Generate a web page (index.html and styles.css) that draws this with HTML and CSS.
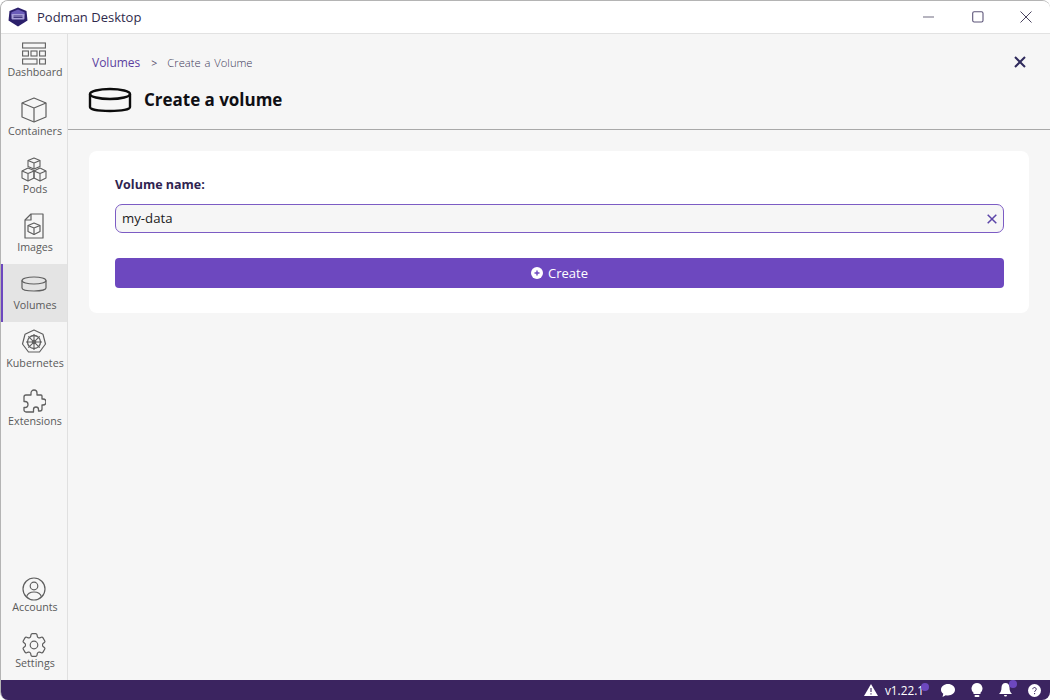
FILE: index.html
```html
<!DOCTYPE html>
<html lang="en">
<head>
<meta charset="utf-8">
<title>Podman Desktop</title>
<link rel="stylesheet" href="styles.css">
</head>
<body>
<div class="window">
  <header class="titlebar">
    <svg class="logo" viewBox="0 0 20 20" width="20" height="20">
      <path d="M10 .5l8.500 3.500 1 9.500L10 19.500.5 13.500l1-9.500z" fill="#2b1f6b"/>
      <path d="M10 2.500l6.500 2.700.5 3H3l.5-3z" fill="#6a5cb8"/>
      <rect x="3.500" y="7" width="13" height="5.500" rx="1" fill="#a8a0d8"/>
      <path d="M5.500 9h9M5.500 10.500h9" stroke="#2b1f6b" stroke-width=".8"/>
    </svg>
    <span class="app-name">Podman Desktop</span>
    <div class="win-controls">
      <svg class="win-btn" viewBox="0 0 12 12" width="12" height="12"><path d="M0 6h11" stroke="#6e6a80" stroke-width="1.200"/></svg>
      <svg class="win-btn" viewBox="0 0 12 12" width="12" height="12"><rect x=".7" y=".7" width="10.300" height="10.300" rx="1.500" fill="none" stroke="#5c5478" stroke-width="1.100"/></svg>
      <svg class="win-btn" viewBox="0 0 12 12" width="12" height="12"><path d="M.5.500l11 11M11.500.500l-11 11" stroke="#4b4560" stroke-width="1"/></svg>
    </div>
  </header>
  <div class="body-row">
    <nav class="sidebar">
      <div class="nav-top">
        <a class="nav-item nav-first">
          <svg viewBox="0 0 24 24" width="24" height="24" class="nav-icon icon-tight"><g fill="none" stroke="#5f5f5f" stroke-width="1.100"><rect x=".6" y="1" width="22.800" height="5"/><rect x=".6" y="9" width="5.800" height="5"/><rect x="9" y="9" width="6" height="5"/><rect x="17.600" y="9" width="5.800" height="5"/><rect x=".6" y="17" width="14.400" height="5"/><rect x="17.600" y="17" width="5.800" height="5"/></g></svg>
          <span>Dashboard</span>
        </a>
        <a class="nav-item">
          <svg viewBox="0 0 26 26" width="26" height="26" class="nav-icon"><g fill="none" stroke="#5f5f5f" stroke-width="1.200" stroke-linejoin="round"><path d="M13 1l12 5v14l-12 5-12-5V6z"/><path d="M1 6l12 5 12-5M13 11v14"/></g></svg>
          <span>Containers</span>
        </a>
        <a class="nav-item">
          <svg viewBox="0 0 26 26" width="26" height="26" class="nav-icon icon-tight"><g fill="none" stroke="#5f5f5f" stroke-width="1.100" stroke-linejoin="round"><path d="M13 1l6 2.500v6L13 12l-6-2.500v-6z"/><path d="M7 3.500l6 2.500 6-2.500M13 6v6"/><path d="M7 11l6 2.500v7.500L7 24l-6-3v-7z"/><path d="M1 14l6 2.500 6-2.500M7 16.500V24"/><path d="M19 11l6 3v7l-6 3-6-3v-7z"/><path d="M13 14l6 2.500 6-2.500M19 16.500V24"/></g></svg>
          <span>Pods</span>
        </a>
        <a class="nav-item">
          <svg viewBox="0 0 22 26" width="22" height="26" class="nav-icon"><g fill="none" stroke="#5f5f5f" stroke-width="1.200" stroke-linejoin="round"><path d="M8 1h12v24H2V7z"/><path d="M8 1v6H2"/><path d="M11 10l6 2.500v6L11 21.500l-6-3v-6z"/><path d="M5 12.500l6 2.500 6-2.500M11 15v6.500"/></g></svg>
          <span>Images</span>
        </a>
        <a class="nav-item active">
          <svg viewBox="0 0 26 16" width="26" height="16" class="nav-icon icon-raised"><g fill="none" stroke="#5f5f5f" stroke-width="1.200"><ellipse cx="13" cy="4.500" rx="12" ry="3.500"/><path d="M1 4.500V12c0 1.800 5 3 12 3s12-1.200 12-3V4.500"/></g></svg>
          <span>Volumes</span>
        </a>
        <a class="nav-item">
          <svg viewBox="0 0 26 26" width="26" height="26" class="nav-icon"><g fill="none" stroke="#5f5f5f"><path d="M13 1l9 4.300 2.500 9.700-6 8H7.500l-6-8L4 5.300z" stroke-width="1.200" stroke-linejoin="round"/><circle cx="13" cy="13" r="6.500" stroke-width="1.300"/><path d="M13 5v16M5 13h16M7.300 7.300l11.400 11.400M18.700 7.300L7.300 18.700" stroke-width="1.100"/><circle cx="13" cy="13" r="1.800" fill="#5f5f5f"/></g></svg>
          <span>Kubernetes</span>
        </a>
        <a class="nav-item">
          <svg viewBox="0 0 24 26" width="24" height="26" class="nav-icon icon-tight"><path d="M9 6V4a3 3 0 016 0v2h4a1 1 0 011 1v3h1a3 3 0 010 6h-1v4a2 2 0 01-2 2h-1.500v-1.500a2.500 2.500 0 00-5 0V23H4a2 2 0 01-2-2v-2.500h1a3 3 0 000-6H2V8a2 2 0 012-2z" fill="none" stroke="#5f5f5f" stroke-width="1.300" stroke-linejoin="round"/></svg>
          <span>Extensions</span>
        </a>
      </div>
      <div class="nav-bottom">
        <a class="nav-item short">
          <svg viewBox="0 0 24 24" width="24" height="24" class="nav-icon icon-tight"><g fill="none" stroke="#5f5f5f" stroke-width="1.200"><circle cx="12" cy="12" r="11"/><circle cx="12" cy="9" r="3.800"/><path d="M4.500 20c1-3.500 4-5 7.500-5s6.500 1.500 7.500 5"/></g></svg>
          <span>Accounts</span>
        </a>
        <a class="nav-item short">
          <svg viewBox="2.500 2.500 19 19" width="24" height="24" class="nav-icon icon-tight"><g fill="none" stroke="#5f5f5f" stroke-width=".95" stroke-linejoin="round"><path d="M9.594 3.940c.09-.542.56-.94 1.110-.94h2.593c.55 0 1.020.398 1.110.94l.213 1.281c.063.374.313.686.645.870.074.040.147.083.22.127.325.196.72.257 1.075.124l1.217-.456a1.125 1.125 0 011.370.490l1.296 2.247a1.125 1.125 0 01-.26 1.431l-1.003.827c-.293.240-.438.613-.431.992a6.759 6.759 0 010 .255c-.007.378.138.750.430.990l1.005.828c.424.350.534.954.260 1.430l-1.298 2.247a1.125 1.125 0 01-1.369.491l-1.217-.456c-.355-.133-.750-.072-1.076.124a6.570 6.570 0 01-.22.128c-.331.183-.581.495-.644.869l-.213 1.280c-.09.543-.56.941-1.110.941h-2.594c-.55 0-1.020-.398-1.110-.940l-.213-1.281c-.062-.374-.312-.686-.644-.870a6.520 6.520 0 01-.22-.127c-.325-.196-.72-.257-1.076-.124l-1.217.456a1.125 1.125 0 01-1.369-.490l-1.297-2.247a1.125 1.125 0 01.26-1.431l1.004-.827c.292-.240.437-.613.430-.992a6.932 6.932 0 010-.255c.007-.378-.138-.750-.430-.990l-1.004-.828a1.125 1.125 0 01-.26-1.430l1.297-2.247a1.125 1.125 0 011.370-.491l1.216.456c.356.133.751.072 1.076-.124.072-.044.146-.087.22-.128.332-.183.582-.495.644-.869l.214-1.281z"/><circle cx="12" cy="12" r="3"/></g></svg>
          <span>Settings</span>
        </a>
      </div>
    </nav>
    <main class="content">
      <div class="page-header">
        <div class="breadcrumb">
          <a class="crumb-link">Volumes</a>
          <span class="crumb-sep">&gt;</span>
          <span class="crumb-current">Create a Volume</span>
        </div>
        <div class="heading-row">
          <svg viewBox="0 0 44 26" width="44" height="26"><g fill="none" stroke="#0c0c0c" stroke-width="2.400"><ellipse cx="22" cy="7" rx="20" ry="5"/><path d="M2 7v13c0 2.500 8 4 20 4s20-1.500 20-4V7"/></g></svg>
          <h1 class="title">Create a volume</h1>
        </div>
        <svg class="close-page" viewBox="0 0 12 12" width="12" height="12"><path d="M1 1l10 10M11 1L1 11" stroke="#2f2a5c" stroke-width="2"/></svg>
      </div>
      <div class="page-body">
        <section class="card">
          <label class="field-label">Volume name:</label>
          <div class="input-box">
            <span class="input-value">my-data</span>
            <svg viewBox="0 0 10 10" width="10" height="10"><path d="M.7.700l8.600 8.600M9.300.700L.7 9.300" stroke="#5b45a8" stroke-width="1.500"/></svg>
          </div>
          <button class="create-btn">
            <svg viewBox="0 0 12 12" width="12" height="12"><circle cx="6" cy="6" r="6" fill="#fff"/><path d="M6 3.500v5M3.500 6h5" stroke="#6d48bf" stroke-width="1.400"/></svg>
            <span>Create</span>
          </button>
        </section>
      </div>
    </main>
  </div>
  <footer class="statusbar">
    <svg class="warn" viewBox="0 0 14 12" width="14" height="12"><path d="M7 0l7 12H0z" fill="#fff"/><path d="M7 4v4M7 9.200v1.300" stroke="#3b2460" stroke-width="1.100"/></svg>
    <span class="version">v1.22.1<i class="dot dot-version"></i></span>
    <svg class="status-icon" viewBox="0 0 14 13" width="14" height="13"><path d="M7 0c3.900 0 7 2.500 7 5.800s-3.100 5.700-7 5.700c-.8 0-1.500-.1-2.200-.3L1.500 13l.8-3.200C.9 8.800 0 7.400 0 5.800 0 2.500 3.100 0 7 0z" fill="#fff"/></svg>
    <svg class="status-icon" viewBox="0 0 12 14" width="12" height="14"><path d="M6 0a5.500 5.500 0 013.500 9.700V11h-7V9.700A5.500 5.500 0 016 0z" fill="#fff"/><rect x="3.500" y="12" width="5" height="2" rx="1" fill="#fff"/></svg>
    <span class="bell-wrap">
      <svg class="status-icon" viewBox="0 0 13 14" width="13" height="14"><path d="M6.500 0C9 0 10.500 2 10.500 4.500c0 3 .8 4.700 2.500 6.500H0c1.700-1.800 2.500-3.500 2.500-6.500C2.500 2 4 0 6.500 0z" fill="#fff"/><path d="M5 12h3a1.500 1.500 0 01-3 0z" fill="#fff"/></svg>
      <i class="dot dot-bell"></i>
    </span>
    <svg class="status-icon" viewBox="0 0 13 13" width="13" height="13"><circle cx="6.500" cy="6.500" r="6.500" fill="#fff"/><path d="M4.800 5.200a1.700 1.700 0 113 1.100c-.6.500-1.200.8-1.200 1.500M6.600 9v1.200" fill="none" stroke="#3b2460" stroke-width="1"/></svg>
  </footer>
</div>
</body>
</html>
```

FILE: styles.css
```css
* { box-sizing: border-box; }
html, body { margin: 0; padding: 0; height: 100%; background: #fff; }
body { font-family: "Open Sans", "Noto Sans", sans-serif; }

.window {
  width: 1050px;
  height: 700px;
  display: flex;
  flex-direction: column;
  border: 1px solid #b4b4b4;
  border-bottom: 0;
  border-right: 0;
  border-radius: 8px;
  overflow: hidden;
  background: #f6f6f6;
}

.titlebar {
  height: 33px;
  flex: none;
  display: flex;
  align-items: center;
  padding-left: 7px;
  background: #fff;
  border-bottom: 1px solid #e2e2e2;
}
.logo { margin-right: 9px; }
.app-name { font-size: 13px; color: #2f2a4c; }
.win-controls { margin-left: auto; display: flex; align-items: center; gap: 36px; padding-right: 18px; }
.win-btn:first-child { margin-right: 1px; }

.body-row { flex: 1; display: flex; min-height: 0; }

.sidebar {
  width: 67px;
  flex: none;
  display: flex;
  flex-direction: column;
  justify-content: space-between;
  background: #f6f6f6;
  border-right: 1px solid #e0e0e0;
}
.nav-item {
  height: 58px;
  display: flex;
  flex-direction: column;
  align-items: center;
  justify-content: flex-end;
  padding-bottom: 10px;
  gap: 1px;
  font-size: 10.700px;
  line-height: 14px;
  color: #5a5a5a;
  border-left: 2px solid transparent;
}
.nav-first { height: 56px; padding-bottom: 11px; }
.short { height: 56px; padding-bottom: 10px; }
.nav-item.active { background: #e4e4e4; border-left-color: #6d48bf; }
.nav-icon { margin-right: 2px; }
.icon-tight { margin-bottom: -2px; }
.icon-raised { margin-bottom: 5px; }

.content { flex: 1; display: flex; flex-direction: column; min-width: 0; }

.page-header {
  position: relative;
  height: 96px;
  flex: none;
  padding: 20px 0 0 24px;
  border-bottom: 1px solid #a9a9a9;
}
.breadcrumb { display: flex; align-items: center; font-size: 12px; line-height: 18px; }
.crumb-link { color: #5b3fa0; }
.crumb-sep { color: #55506a; margin: 0 10px 0 11px; font-size: 10.500px; }
.crumb-current { color: #3f3a5a; font-size: 11.200px; word-spacing: 1px; font-weight: 300; }
.heading-row { display: flex; align-items: center; gap: 12px; margin-top: 15px; margin-left: -4px; }
.title { margin: 0; font-size: 17px; line-height: 26px; font-weight: 700; color: #0f0f14; letter-spacing: -.02px; }
.close-page { position: absolute; top: 22px; right: 24px; }

.page-body { flex: 1; padding: 21px 21px 0 21px; }
.card {
  height: 162px;
  background: #fff;
  border-radius: 8px;
  padding: 25px 25px 0 26px;
}
.field-label { display: block; font-size: 12.500px; line-height: 18px; font-weight: 700; color: #2f2450; }
.input-box {
  height: 29px;
  margin-top: 10px;
  display: flex;
  align-items: center;
  justify-content: space-between;
  padding: 0 6px 0 6px;
  background: #f6f6f6;
  border: 1px solid #7c5cc4;
  border-radius: 7px;
}
.input-value { font-size: 13.200px; line-height: 18px; color: #1c1c1c; position: relative; top: -1px; }
.create-btn {
  width: 100%;
  height: 30px;
  margin-top: 25px;
  display: flex;
  align-items: center;
  justify-content: center;
  gap: 5px;
  background: #6d48bf;
  border: 0;
  border-radius: 4px;
  color: #fff;
  font: 400 13px "Open Sans", "Noto Sans", sans-serif;
}

.statusbar {
  height: 20px;
  flex: none;
  display: flex;
  align-items: center;
  justify-content: flex-end;
  gap: 16px;
  padding-right: 9px;
  background: #3b2460;
  margin-left: -1px;
}
.warn { margin-right: -9px; }
.version { position: relative; font-size: 11.800px; color: #fff; margin-right: 1px; }
.dot { position: absolute; width: 8px; height: 8px; border-radius: 50%; background: #6d48bf; }
.dot-version { top: 1px; right: -5px; }
.bell-wrap { position: relative; display: flex; }
.dot-bell { top: -3px; right: -5px; }
```
